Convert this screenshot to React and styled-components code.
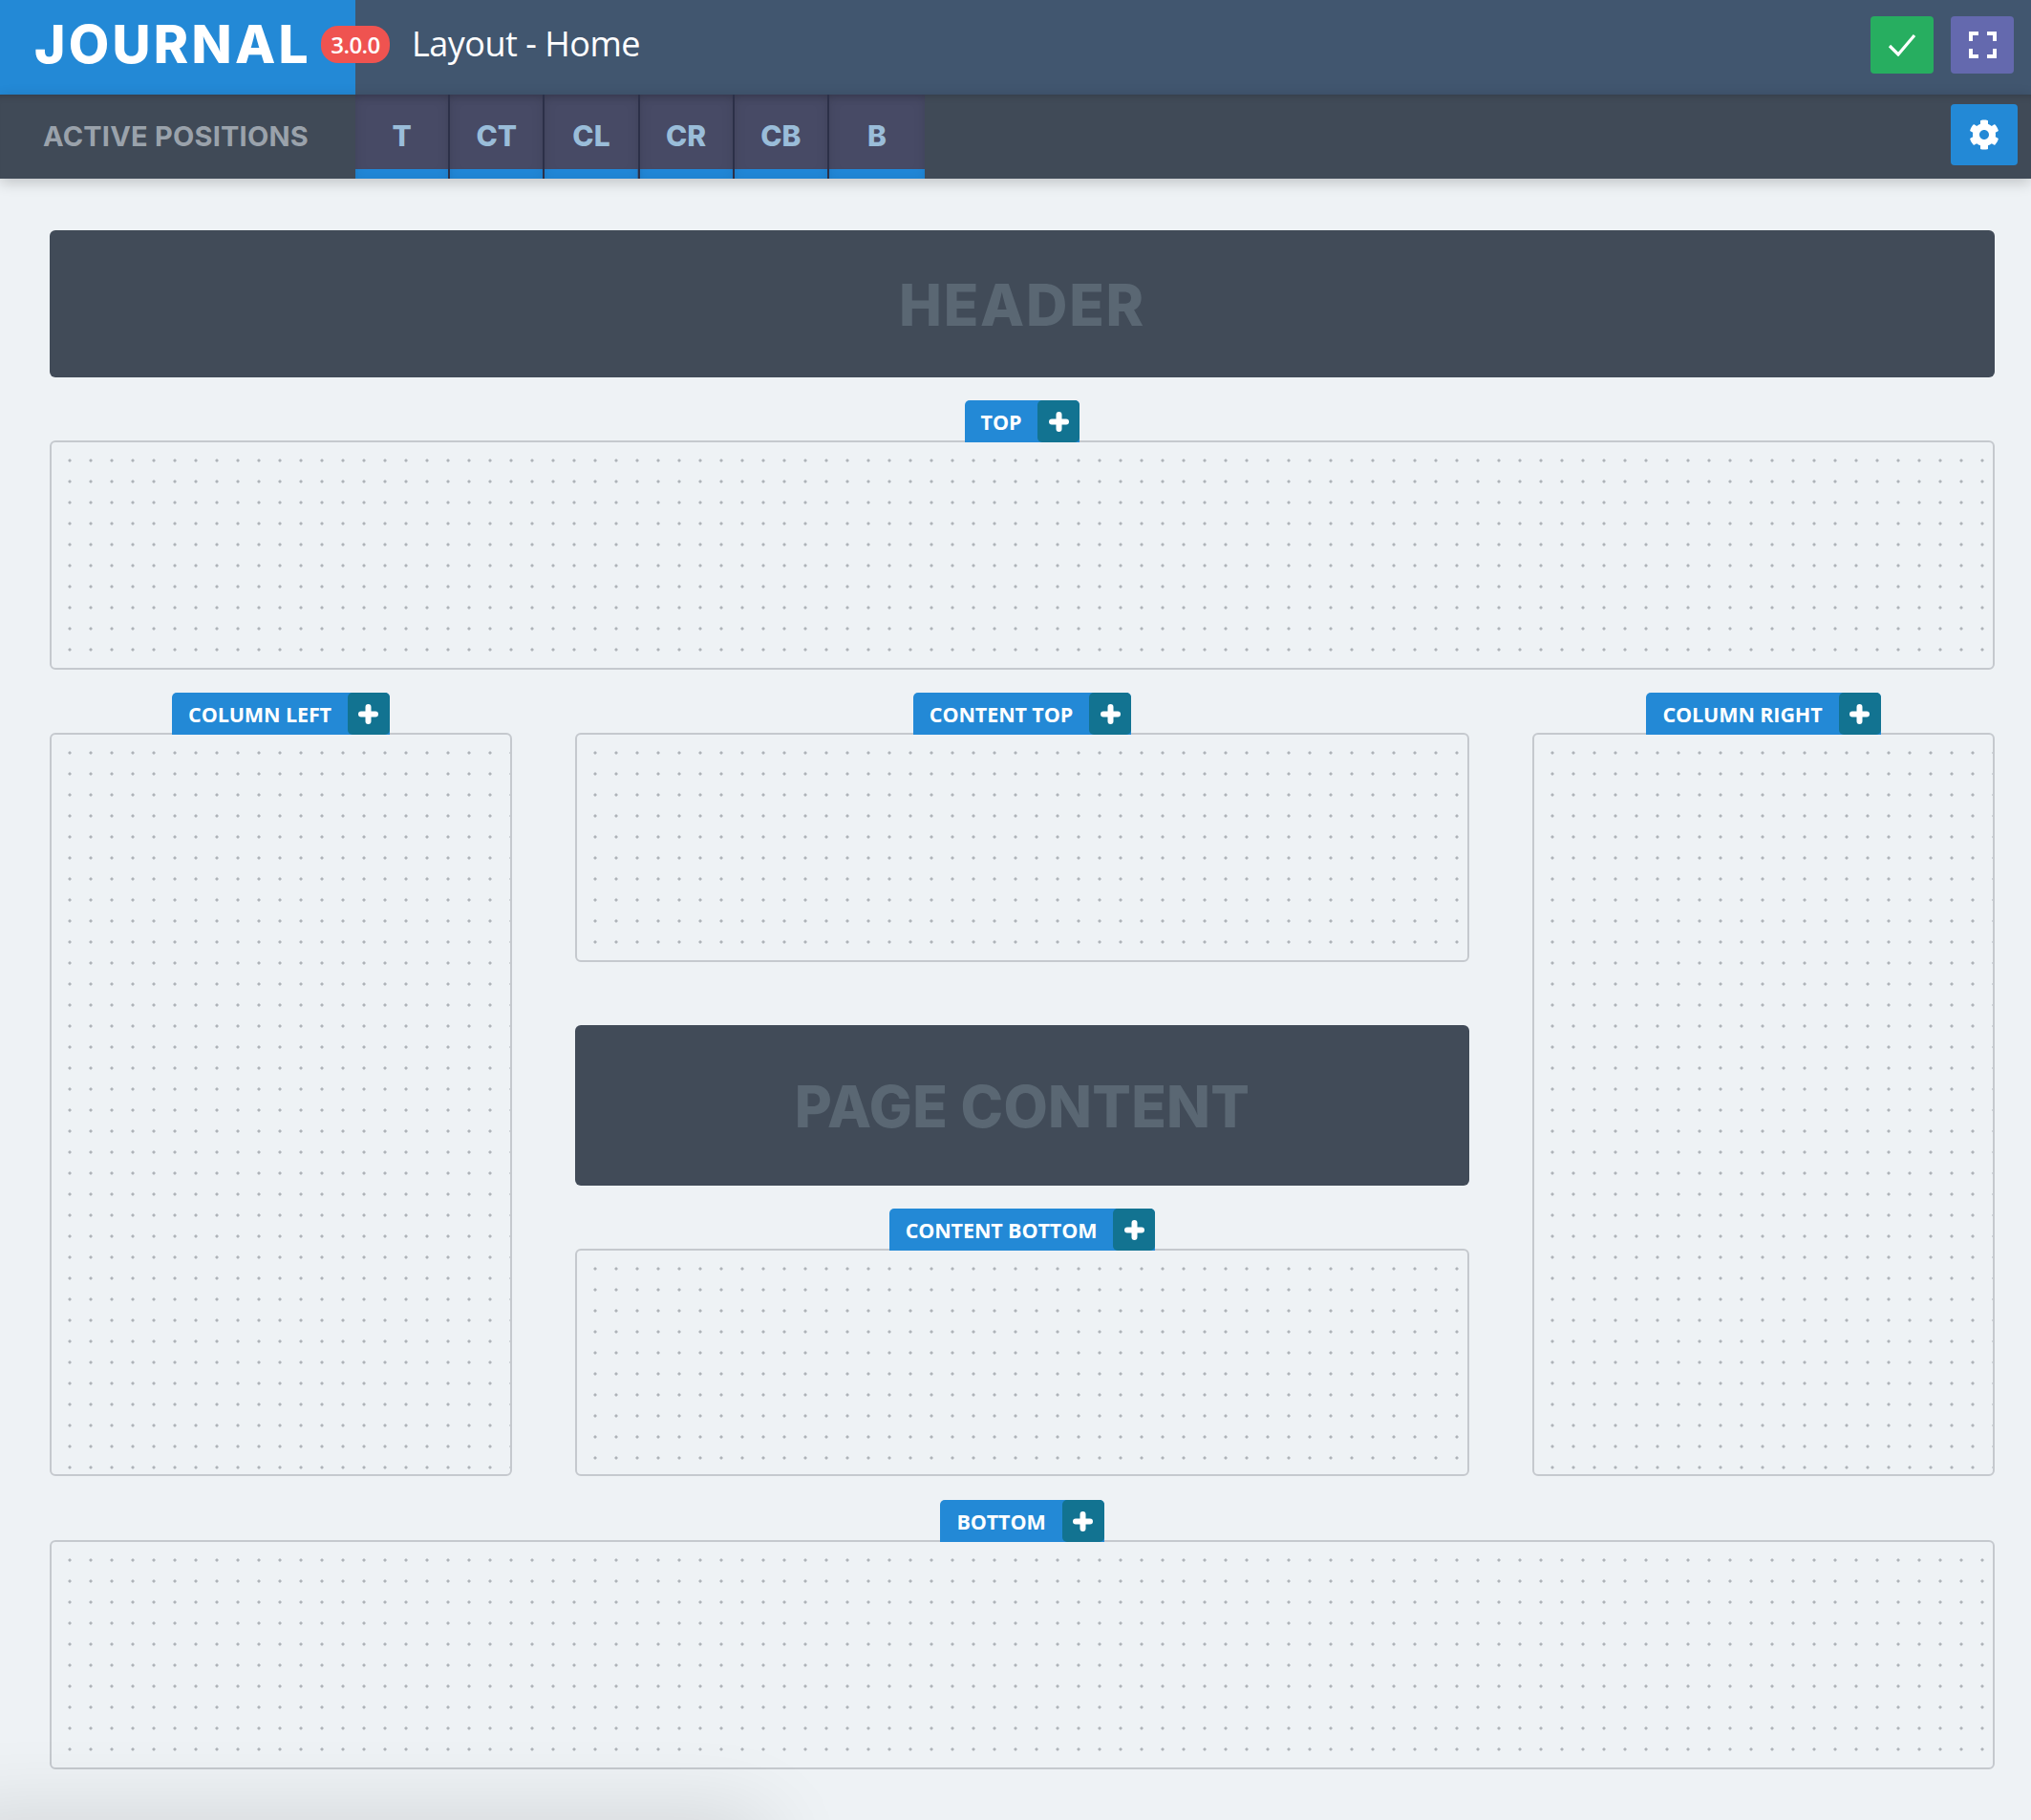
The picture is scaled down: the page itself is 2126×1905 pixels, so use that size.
import React from 'react';
import styled, { createGlobalStyle } from 'styled-components';
import { FaCog } from 'react-icons/fa';

const GlobalStyle = createGlobalStyle`
  html, body {
    margin: 0;
    padding: 0;
    background: #eef2f5;
    font-family: "Open Sans", "Liberation Sans", sans-serif;
  }
`;

const Page = styled.div`
  position: relative;
  width: 2126px;
  height: 1905px;
  overflow: hidden;
  background: #eef2f5;
`;

const TopBar = styled.header`
  display: flex;
  align-items: center;
  height: 99px;
  background: #41566f;
`;

const Logo = styled.div`
  position: relative;
  flex: none;
  display: flex;
  align-items: center;
  box-sizing: border-box;
  width: 372px;
  height: 99px;
  padding: 0 0 7px 36px;
  background: #2389d6;
  color: #fff;
  font: 800 55px/1 Inter, "Liberation Sans", sans-serif;
  letter-spacing: 3.3px;
`;

const VersionBadge = styled.span`
  position: absolute;
  left: 336px;
  top: 27px;
  display: flex;
  align-items: center;
  justify-content: center;
  width: 72px;
  height: 39px;
  padding-top: 1px;
  box-sizing: border-box;
  border-radius: 18px;
  background: #ef5350;
  font: 600 24px/1 "Open Sans", sans-serif;
  letter-spacing: -0.6px;
`;

const PageTitle = styled.h1`
  margin: 0 0 7px 59px;
  color: #fff;
  font: 400 36px/1 "Open Sans", sans-serif;
  letter-spacing: -0.5px;
`;

const TopActions = styled.div`
  display: flex;
  align-self: flex-start;
  gap: 18px;
  margin: 17px 18px 0 auto;
`;

const IconButton = styled.button`
  display: flex;
  align-items: center;
  justify-content: center;
  width: 66px;
  height: 60px;
  padding: 0;
  border: none;
  border-radius: 4px;
  background: ${(p) => p.$bg};
  color: #fff;
`;

const PositionsBar = styled.div`
  position: relative;
  display: flex;
  height: 88px;
  background: #404a57;
  box-shadow: inset 0 8px 8px -8px rgba(0, 0, 0, 0.25), 0 4px 14px rgba(0, 0, 0, 0.2);
`;

const PositionsLabel = styled.div`
  flex: none;
  box-sizing: border-box;
  width: 372px;
  padding-left: 45px;
  color: #9aa2ab;
  font: 700 29px/88px Inter, "Liberation Sans", sans-serif;
  letter-spacing: 0.2px;
`;

const Tab = styled.div`
  box-sizing: border-box;
  width: ${(p) => (p.$last ? '100px' : '99.2px')};
  height: 88px;
  border-right: ${(p) => (p.$last ? 'none' : '2px solid #2c3048')};
  background: linear-gradient(#2188d9, #2188d9) bottom / 100% 10px no-repeat, #474a65;
  box-shadow: inset 0 0 14px rgba(0, 0, 0, 0.08), inset 0 8px 8px -6px rgba(0, 0, 0, 0.22);
  color: #9abdd9;
  font: 800 30px/86px Inter, "Liberation Sans", sans-serif;
  text-align: center;
`;

const SettingsButton = styled(IconButton)`
  align-self: flex-start;
  width: 70px;
  height: 64px;
  margin: 10px 14px 0 auto;
`;

const Main = styled.main`
  display: flex;
  flex-direction: column;
  padding: 54px 38px 0 52px;
`;

const Block = styled.div`
  display: flex;
  align-items: center;
  justify-content: center;
  box-sizing: border-box;
  height: ${(p) => p.$h}px;
  margin-top: ${(p) => p.$top || 0}px;
  padding-top: 2px;
  border-radius: 6px;
  background: #414b58;
  color: #5a6773;
  font: 800 60px/1 Inter, "Liberation Sans", sans-serif;
  letter-spacing: ${(p) => p.$spacing || 0}px;
`;

const Position = styled.section`
  display: flex;
  flex-direction: column;
  align-items: center;
  flex: ${(p) => (p.$fill ? '1' : 'none')};
  margin-top: ${(p) => p.$top || 0}px;
`;

const Tag = styled.div`
  position: relative;
  z-index: 1;
  display: flex;
  height: 44px;
  border-radius: 5px 5px 0 0;
  background: #2389d6;
  color: #fff;
  font: 700 21.5px/45px "Open Sans", sans-serif;
  letter-spacing: -0.1px;
`;

const TagLabel = styled.span`
  padding: 0 17px;
`;

const TagAdd = styled.span`
  display: flex;
  align-items: center;
  justify-content: center;
  width: 44px;
  border-radius: 5px;
  background: #127391;
`;

const Dropzone = styled.div`
  box-sizing: border-box;
  align-self: stretch;
  flex: ${(p) => (p.$fill ? '1' : 'none')};
  height: ${(p) => (p.$fill ? 'auto' : '240px')};
  margin-top: -2px;
  border: 2px solid #c5c9ce;
  border-radius: 6px;
  background-image: radial-gradient(circle, #aeb3b8 1.1px, rgba(174, 179, 184, 0) 2px);
  background-size: 22px 22px;
  background-position: 8px 8px;
`;

const Columns = styled.div`
  display: grid;
  grid-template-columns: 484px 936px 484px;
  column-gap: 66px;
  height: 820px;
  margin-top: 24px;
`;

const CenterColumn = styled.div`
  display: flex;
  flex-direction: column;
`;

const BottomShade = styled.div`
  position: absolute;
  left: -60px;
  bottom: -80px;
  width: 860px;
  height: 80px;
  box-shadow: 0 0 90px 0 rgba(0, 0, 0, 0.14);
`;

const Check = () => (
  <svg width="30" height="24" viewBox="0 0 30 24" fill="none" stroke="#fff" strokeWidth="3.2">
    <path d="M2 13l9 9L28 2" />
  </svg>
);

const Expand = () => (
  <svg width="29" height="28" viewBox="0 0 29 28" fill="#fff">
    <path d="M0 0h10v4H4v6H0zM19 0h10v10h-4V4h-6zM0 18h4v6h6v4H0zM25 18h4v10H19v-4h6z" />
  </svg>
);

const Plus = () => (
  <svg width="21" height="21" viewBox="0 0 21 21" fill="none" stroke="#fff" strokeWidth="6" strokeLinecap="round">
    <path d="M10.5 3v15M3 10.5h15" />
  </svg>
);

const tabs = ['T', 'CT', 'CL', 'CR', 'CB', 'B'];

function Zone({ name, fill, top }) {
  return (
    <Position $fill={fill} $top={top}>
      <Tag>
        <TagLabel>{name}</TagLabel>
        <TagAdd>
          <Plus />
        </TagAdd>
      </Tag>
      <Dropzone $fill={fill} />
    </Position>
  );
}

export default function App() {
  return (
    <Page>
      <GlobalStyle />
      <TopBar>
        <Logo>
          JOURNAL
          <VersionBadge>3.0.0</VersionBadge>
        </Logo>
        <PageTitle>Layout - Home</PageTitle>
        <TopActions>
          <IconButton $bg="#27ae60">
            <Check />
          </IconButton>
          <IconButton $bg="#6469ae">
            <Expand />
          </IconButton>
        </TopActions>
      </TopBar>
      <PositionsBar>
        <PositionsLabel>ACTIVE POSITIONS</PositionsLabel>
        {tabs.map((t, i) => (
          <Tab key={t} $last={i === tabs.length - 1}>{t}</Tab>
        ))}
        <SettingsButton $bg="#2389d6">
          <FaCog size={32} />
        </SettingsButton>
      </PositionsBar>
      <Main>
        <Block $h={154} $spacing={1.8}>HEADER</Block>
        <Zone name="TOP" top={24} />
        <Columns>
          <Zone name="COLUMN LEFT" fill />
          <CenterColumn>
            <Zone name="CONTENT TOP" />
            <Block $h={168} $top={66} $spacing={0.3}>PAGE CONTENT</Block>
            <Zone name="CONTENT BOTTOM" fill top={24} />
          </CenterColumn>
          <Zone name="COLUMN RIGHT" fill />
        </Columns>
        <Zone name="BOTTOM" top={25} />
      </Main>
      <BottomShade />
    </Page>
  );
}
